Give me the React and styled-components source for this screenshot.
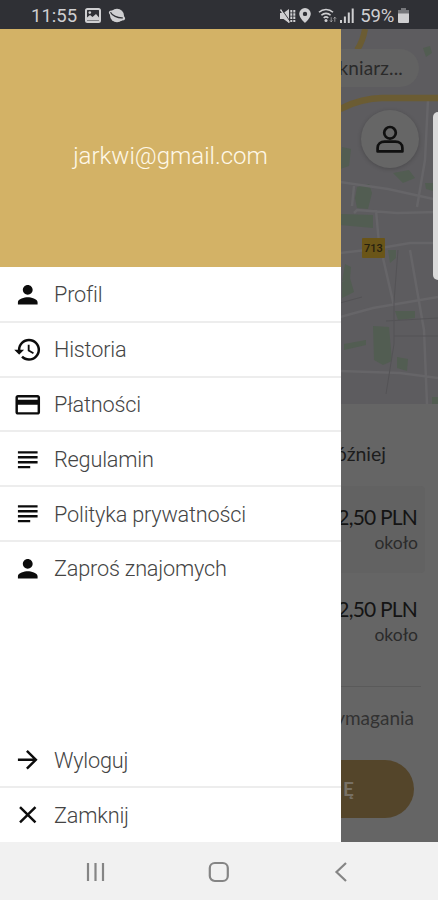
import React from 'react';
import styled, { createGlobalStyle } from 'styled-components';
import {
  MdArrowForward,
  MdClose,
  MdHistory,
  MdOutlineCreditCard,
  MdPerson,
  MdSubject,
} from 'react-icons/md';

const GlobalStyle = createGlobalStyle`
  * {
    box-sizing: border-box;
  }

  body {
    margin: 0;
    background: #f1f1f1;
  }
`

const Phone = styled.div`
  display: flex;
  flex-direction: column;
  width: 438px;
  height: 900px;
  overflow: hidden;
  font-family: Roboto, "Liberation Sans", sans-serif;
`

const StatusBar = styled.header`
  display: flex;
  align-items: center;
  justify-content: space-between;
  height: 29px;
  padding: 2px 29px 0 31px;
  background: #2f3035;
  color: #cfcfd1;
  font-size: 18.5px;
  line-height: 26px;

  svg {
    display: block;
  }
`

const StatusGroup = styled.div`
  display: flex;
  align-items: center;
`

const StatusText = styled.span`
  letter-spacing: ${({ $spacing }) => $spacing || '0'};
  margin-right: ${({ $gap }) => $gap || '0'};
`

const StatusIcon = styled.svg`
  margin-right: ${({ $gap }) => $gap || '0'};
`

const Stage = styled.div`
  position: relative;
  height: 813px;
`

const Drawer = styled.aside`
  position: absolute;
  top: 0;
  left: 0;
  display: flex;
  flex-direction: column;
  width: 341px;
  height: 813px;
  background: #fff;
`

const Account = styled.div`
  display: flex;
  align-items: center;
  justify-content: center;
  height: 238px;
  padding-top: 15px;
  background: #d3b266;
  color: #fff8e8;
  font-size: 24px;
  font-weight: 300;
`

const Menu = styled.nav`
  display: flex;
  flex-direction: column;
  justify-content: space-between;
  flex: 1;
  padding-top: 1px;
`

const MenuRow = styled.a`
  display: flex;
  align-items: center;
  gap: 12px;
  height: ${({ $last }) => ($last ? '54px' : '54.8px')};
  padding: ${({ $last }) => ($last ? '0' : '1px')} 0 0 12.5px;
  border-bottom: ${({ $last }) => ($last ? '0' : '2px solid #ededed')};
  color: #444;
  font-size: 21.7px;
  font-weight: 300;
  letter-spacing: -0.2px;

  svg {
    width: 29.5px;
    height: 29.5px;
    color: #0c0c0c;
  }
`

const Screen = styled.main`
  display: flex;
  flex-direction: column;
  height: 813px;
  background: #656565;
  font-family: Lato, "Liberation Sans", sans-serif;
  color: #1c1c1c;
`

const MapArea = styled.section`
  position: relative;
  display: flex;
  flex-direction: column;
  align-items: flex-end;
  height: 375px;
  padding-top: 20px;
  background: #5d5c5f;
`

const MapDrawing = styled.svg`
  position: absolute;
  top: 0;
  right: 0;
`

const Address = styled.div`
  position: relative;
  width: 390px;
  height: 38px;
  margin-right: 19px;
  padding-right: 16px;
  border-radius: 19px;
  background: #626262;
  color: #2a2a2a;
  font-size: 19px;
  line-height: 38px;
  letter-spacing: 0.15px;
  text-align: right;
`

const ProfileButton = styled.div`
  position: relative;
  display: flex;
  align-items: center;
  justify-content: center;
  width: 58px;
  height: 58px;
  margin: 23px 19px 0 0;
  border-radius: 50%;
  background: #666;
  box-shadow: 0 1px 4px rgba(0, 0, 0, 0.2);
`

const EdgeHandle = styled.div`
  position: absolute;
  top: 83px;
  right: 0;
  width: 5px;
  height: 168px;
  border-radius: 5px 0 0 5px;
  background: #dadada;
`

const Sheet = styled.section`
  display: flex;
  flex-direction: column;
  align-items: flex-end;
  flex: 1;
`

const Later = styled.div`
  height: 82px;
  padding: 37px 52px 0 0;
  font-size: 19.5px;
  line-height: 26px;
`

const Fare = styled.div`
  width: 410px;
  height: ${({ $active }) => ($active ? '87px' : '92px')};
  margin-right: 13px;
  padding: ${({ $active }) => ($active ? '17px' : '22px')} 7px 0 0;
  border-radius: 4px;
  background: ${({ $active }) => ($active ? '#626262' : 'transparent')};
  text-align: right;
`

const Price = styled.div`
  padding-right: 1px;
  font-size: 21px;
  line-height: 28px;
  letter-spacing: -0.8px;
  color: #141414;
`

const About = styled.div`
  padding-top: 1px;
  font-size: 17.5px;
  line-height: 22px;
  color: #2b2b2b;
`

const Requirements = styled.div`
  width: 404px;
  height: 74px;
  margin: 21px 17px 0 0;
  padding: 17px 7px 0 0;
  border-top: 1px solid #5a5a5a;
  color: #323232;
  font-size: 19px;
  line-height: 28px;
  text-align: right;
`

const OrderButton = styled.div`
  width: 390px;
  height: 58px;
  margin-right: 24px;
  padding-right: 57px;
  border-radius: 29px;
  background: #54452a;
  color: #777064;
  font-size: 19px;
  font-weight: 700;
  line-height: 58px;
  letter-spacing: 3px;
  text-align: right;
`

const NavBar = styled.footer`
  display: flex;
  justify-content: center;
  height: 58px;
  padding-right: 1px;
  background: #f1f1f1;
`

const NavKey = styled.div`
  display: flex;
  align-items: center;
  justify-content: center;
  width: 122.5px;
  padding-top: 1px;
`

const mainItems = [
  { label: 'Profil', Icon: MdPerson },
  { label: 'Historia', Icon: MdHistory },
  { label: 'Płatności', Icon: MdOutlineCreditCard },
  { label: 'Regulamin', Icon: MdSubject },
  { label: 'Polityka prywatności', Icon: MdSubject },
  { label: 'Zaproś znajomych', Icon: MdPerson },
]

const footerItems = [
  { label: 'Wyloguj', Icon: MdArrowForward },
  { label: 'Zamknij', Icon: MdClose },
]

function MenuList({ items }) {
  return (
    <div>
      {items.map(({ label, Icon }, i) => (
        <MenuRow key={label} $last={i === items.length - 1}>
          <Icon />
          {label}
        </MenuRow>
      ))}
    </div>
  )
}

function Status() {
  return (
    <StatusBar>
      <StatusGroup>
        <StatusText $gap="8px">11:55</StatusText>
        <StatusIcon width="16" height="15" viewBox="0 0 16 15" $gap="7px">
          <rect x="1" y="1" width="14" height="13" rx="1.5" fill="none" stroke="currentColor" strokeWidth="2" />
          <path d="M2 12.5V9.500l3-2.500 2.500 2L11 6l3 3.500v3z" fill="currentColor" />
          <circle cx="4.8" cy="4.6" r="1.3" fill="currentColor" />
        </StatusIcon>
        <StatusIcon width="18" height="15" viewBox="0 0 18 15">
          <ellipse cx="9" cy="7.5" rx="7" ry="6.8" fill="currentColor" />
          <ellipse cx="9" cy="7.5" rx="8.8" ry="3.6" fill="currentColor" transform="rotate(25 9 7.5)" />
          <path d="M2.5 4.2c1.5 3.2 7 6 12.3 5.6" fill="none" stroke="#2f3035" strokeWidth="1.2" />
        </StatusIcon>
      </StatusGroup>
      <StatusGroup>
        <StatusIcon width="17" height="16" viewBox="0 0 17 16" $gap="3px">
          <path d="M1 5h3.5L10 1v14l-5.500-4H1z" fill="currentColor" />
          <path d="M1.500 1.500l9 13" stroke="currentColor" strokeWidth="1.5" />
          <path d="M2.900 1.500l9 13" stroke="#2f3035" strokeWidth="0.9" />
          <path d="M12.300 2v12M15.300 2v12" fill="none" stroke="currentColor" strokeWidth="2" strokeDasharray="2.400 0.900" />
        </StatusIcon>
        <StatusIcon width="12" height="15" viewBox="0 0 12 15" $gap="7px">
          <path fillRule="evenodd" d="M6 0a5.8 5.8 0 0 0-5.8 5.8C.2 10 6 15 6 15s5.8-5 5.8-9.2A5.8 5.8 0 0 0 6 0zm0 3.7a2.2 2.2 0 1 1 0 4.4 2.2 2.2 0 0 1 0-4.4z" fill="currentColor" />
        </StatusIcon>
        <StatusIcon width="19" height="15" viewBox="0 0 19 15" $gap="3px">
          <path d="M1 4.300a10 10 0 0 1 14 0M3.400 7.300a6.500 6.500 0 0 1 9.200 0M5.700 10a3.300 3.300 0 0 1 4.600 0" fill="none" stroke="currentColor" strokeWidth="1.6" />
          <circle cx="8" cy="12.5" r="1.5" fill="currentColor" />
          <path d="M13.200 9.200v4.600M11.900 12.400l1.300 1.400 1.300-1.400M16.800 13.800V9.200M15.500 10.600l1.300-1.400 1.300 1.400" fill="none" stroke="currentColor" strokeWidth="1" opacity="0.6" />
        </StatusIcon>
        <StatusIcon width="14" height="15" viewBox="0 0 14 15" $gap="6px">
          <path d="M0 12h2v3H0zM3.900 8.500h2V15h-2zM7.800 4.500h2V15h-2zM11.700 0.500h2V15h-2z" fill="currentColor" />
        </StatusIcon>
        <StatusText $gap="4px" $spacing="-0.2px">59%</StatusText>
        <StatusIcon width="11" height="15" viewBox="0 0 11 15">
          <path d="M3 0h5v2h3v4H0V2h3z" fill="currentColor" opacity="0.45" />
          <path d="M0 5.500h11V14a1 1 0 0 1-1 1H1a1 1 0 0 1-1-1z" fill="currentColor" />
        </StatusIcon>
      </StatusGroup>
    </StatusBar>
  )
}

function CityMap() {
  return (
    <MapDrawing width="98" height="375" viewBox="340 29 98 375">
      <g fill="#525d52">
        <path d="M423 48l7-2 2 7-6 4zM342 147l9 2-2 17-9 3zM340 214l33 1v13l-33-3zM388 250h8v8l-6 5zM345 264l6 3-1 12-8 2zM342 282l8-4 4 14-12 6z" />
        <path d="M357 187l12-3 3 9-4 16-11-1-2-10zM393 173l16-3 6 8-12 5zM373 326l16 1 3 34-9 4-9-5zM397 357l11 2-1 12-10-3zM344 344l22-4v5l-22 5zM395 311h20v7l-17 2z" />
        <path d="M425 183h12v9l-11-3zM432 397h6v7h-6z" />
      </g>
      <g fill="none" stroke="#666568" strokeWidth="2.5">
        <path d="M340 182l48 7 50 11M428 100l-3 60-8 47" />
        <path d="M410 250l14 80 3 74M340 253l35-4 35-6h28M383 258l11 48M340 317l33-9 65-11M340 371l60 2 38 5M354 213l3-3 40 3 41-1M354 186l-2 20M376 210l3 34" />
      </g>
      <g fill="none" stroke="#545356">
        <path d="M398 250l-4 52v42l-8 50M386 321l52-3M394 336h44M340 303l22-6" />
      </g>
      <path d="M340 109q22-11 42-11t56 0" fill="none" stroke="#6b5c33" strokeWidth="6.5" />
      <path d="M365 29q-2 12-8 21" fill="none" stroke="#6b5c33" strokeWidth="6" />
      <rect x="362" y="238" width="23" height="20" rx="1" fill="#6a5518" />
      <text x="373.5" y="252" textAnchor="middle" fontFamily="Roboto, sans-serif" fontSize="11" fontWeight="500" fill="#26200f">713</text>
    </MapDrawing>
  )
}

function RideScreen() {
  return (
    <Screen>
      <MapArea>
        <CityMap />
        <Address>Włókniarz...</Address>
        <ProfileButton>
          <svg width="28" height="28" viewBox="0 0 28 28" fill="none" stroke="#101010" strokeWidth="2.7">
            <circle cx="14" cy="7.8" r="5.8" />
            <path d="M1.600 26.400V23c0-4 3.200-6.400 7-6.400h10.800c3.800 0 7 2.400 7 6.400v3.400z" strokeLinejoin="round" />
          </svg>
        </ProfileButton>
        <EdgeHandle />
      </MapArea>
      <Sheet>
        <Later>Później</Later>
        <Fare $active>
          <Price>12,50 PLN</Price>
          <About>około</About>
        </Fare>
        <Fare>
          <Price>12,50 PLN</Price>
          <About>około</About>
        </Fare>
        <Requirements>Wymagania</Requirements>
        <OrderButton>ZAMÓW TAKSÓWKĘ</OrderButton>
      </Sheet>
    </Screen>
  )
}

function NavigationBar() {
  return (
    <NavBar>
      <NavKey>
        <svg width="20" height="20" viewBox="0 0 20 20" stroke="#858585" strokeWidth="2.2">
          <path d="M2 1v18M9.500 1v18M17 1v18" />
        </svg>
      </NavKey>
      <NavKey>
        <svg width="22" height="22" viewBox="0 0 22 22" fill="none" stroke="#858585" strokeWidth="2.2">
          <rect x="1.8" y="2" width="18" height="18" rx="5" />
        </svg>
      </NavKey>
      <NavKey>
        <svg width="14" height="20" viewBox="0 0 14 20" fill="none" stroke="#858585" strokeWidth="2.2">
          <path d="M12 1L2.500 10l9.500 9" />
        </svg>
      </NavKey>
    </NavBar>
  )
}

function App() {
  return (
    <Phone>
      <GlobalStyle />
      <Status />
      <Stage>
        <RideScreen />
        <Drawer>
          <Account>jarkwi@gmail.com</Account>
          <Menu>
            <MenuList items={mainItems} />
            <MenuList items={footerItems} />
          </Menu>
        </Drawer>
      </Stage>
      <NavigationBar />
    </Phone>
  )
}

export default App;
